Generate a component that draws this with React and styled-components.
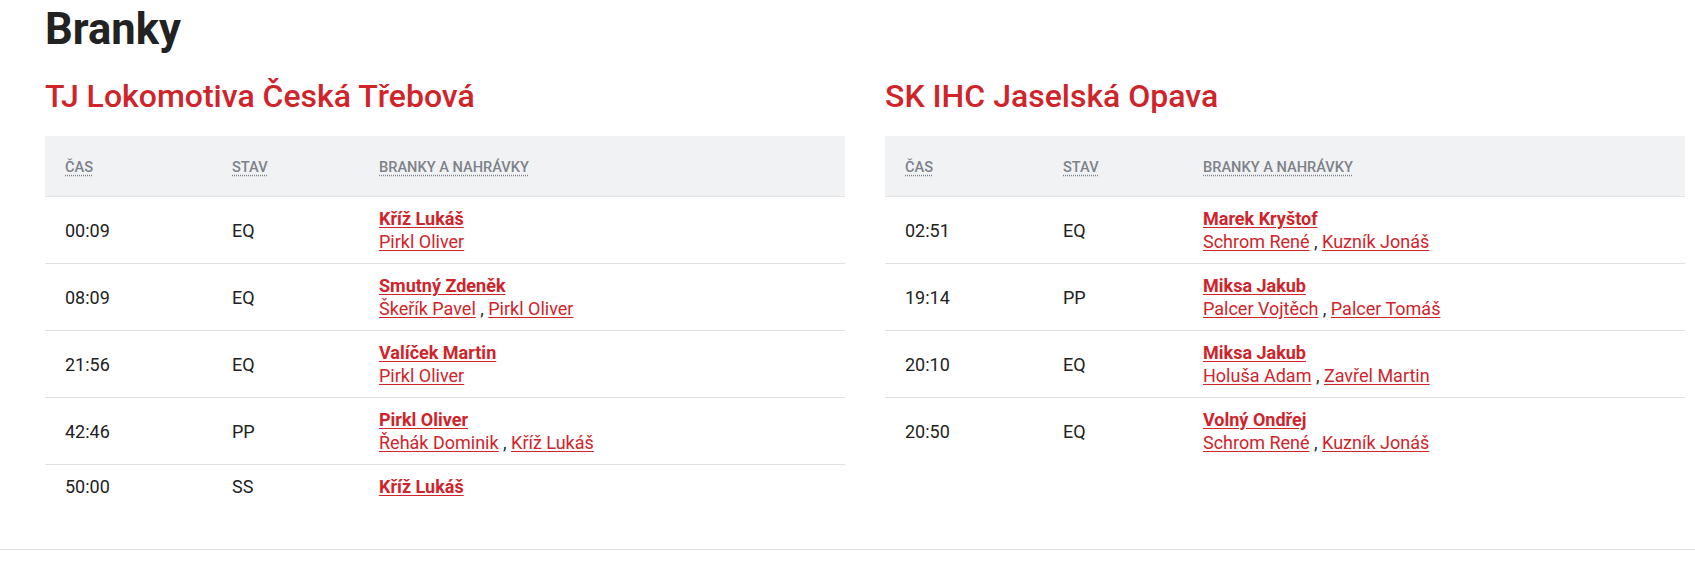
import styled, { createGlobalStyle } from "styled-components";

const GlobalStyle = createGlobalStyle`
  body {
    margin: 0;
    background: #fff;
    font-family: Roboto, "Liberation Sans", Arial, sans-serif;
    color: #222;
  }
`;

const goals = [
    {
        team: "TJ Lokomotiva Česká Třebová",
        cols: "167px 147px 1fr",
        rows: [
            { time: "00:09", state: "EQ", scorer: "Kříž Lukáš", assists: ["Pirkl Oliver"] },
            { time: "08:09", state: "EQ", scorer: "Smutný Zdeněk", assists: ["Škeřík Pavel", "Pirkl Oliver"] },
            { time: "21:56", state: "EQ", scorer: "Valíček Martin", assists: ["Pirkl Oliver"] },
            { time: "42:46", state: "PP", scorer: "Pirkl Oliver", assists: ["Řehák Dominik", "Kříž Lukáš"] },
            { time: "50:00", state: "SS", scorer: "Kříž Lukáš", assists: [] },
        ],
    },
    {
        team: "SK IHC Jaselská Opava",
        cols: "158px 140px 1fr",
        rows: [
            { time: "02:51", state: "EQ", scorer: "Marek Kryštof", assists: ["Schrom René", "Kuzník Jonáš"] },
            { time: "19:14", state: "PP", scorer: "Miksa Jakub", assists: ["Palcer Vojtěch", "Palcer Tomáš"] },
            { time: "20:10", state: "EQ", scorer: "Miksa Jakub", assists: ["Holuša Adam", "Zavřel Martin"] },
            { time: "20:50", state: "EQ", scorer: "Volný Ondřej", assists: ["Schrom René", "Kuzník Jonáš"] },
        ],
    },
];

const Section = styled.section`
  padding: 0 10px 41px 45px;
  border-bottom: 1px solid #e2e2e2;
`;

const Title = styled.h1`
  margin: 0;
  padding-top: 5px;
  font-size: 43.5px;
  line-height: 50px;
  font-weight: 700;
  color: #222;
`;

const Columns = styled.div`
  display: grid;
  grid-template-columns: 1fr 1fr;
  gap: 40px;
`;

const TeamName = styled.h2`
  margin: 21px 0 0;
  font-size: 32px;
  line-height: 40px;
  font-weight: 500;
  color: #d0242b;
`;

const Table = styled.div`
  margin-top: 20px;
`;

const Row = styled.div`
  display: grid;
  grid-template-columns: ${({ $cols }) => $cols};
  align-items: center;
  background: ${({ $head }) => ($head ? "#f1f2f4" : "transparent")};
  min-height: ${({ $head }) => ($head ? "60px" : "0")};
  & + & {
    border-top: ${({ $first }) => ($first ? "none" : "1px solid #e1e1e3")};
  }
`;

const Cell = styled.div`
  padding: 10px 20px;
  font-size: 18px;
  line-height: 23px;
  color: #222;
`;

const HeadLabel = styled.abbr`
  font-size: 14.6px;
  font-weight: 500;
  color: #7d828a;
  text-transform: uppercase;
  text-decoration: underline dotted;
  text-underline-offset: 3px;
  cursor: help;
`;

const PlayerLink = styled.a`
  color: #d0242b;
  font-weight: ${({ $bold }) => ($bold ? 700 : 400)};
  text-decoration: underline;
  text-underline-offset: 2px;
`;

const Line = styled.div`
  display: block;
`;

function GoalTable({ team }) {
    return (
        <div>
            <TeamName>{team.team}</TeamName>
            <Table>
                <Row $head $cols={team.cols}>
                    <Cell><HeadLabel title="Čas">Čas</HeadLabel></Cell>
                    <Cell><HeadLabel title="Stav">Stav</HeadLabel></Cell>
                    <Cell><HeadLabel title="Branky a nahrávky">Branky a nahrávky</HeadLabel></Cell>
                </Row>
                {team.rows.map((goal, i) => (
                    <Row key={i} $cols={team.cols} $first={i === 0}>
                        <Cell>{goal.time}</Cell>
                        <Cell>{goal.state}</Cell>
                        <Cell>
                            <Line><PlayerLink href="#" $bold>{goal.scorer}</PlayerLink></Line>
                            {goal.assists.length > 0 && (
                                <Line>
                                    {goal.assists.map((name, j) => (
                                        <span key={j}>
                                            {j > 0 && " , "}
                                            <PlayerLink href="#">{name}</PlayerLink>
                                        </span>
                                    ))}
                                </Line>
                            )}
                        </Cell>
                    </Row>
                ))}
            </Table>
        </div>
    );
}

export default function App() {
    return (
        <>
            <GlobalStyle />
            <Section>
                <Title>Branky</Title>
                <Columns>
                    {goals.map((team) => (
                        <GoalTable key={team.team} team={team} />
                    ))}
                </Columns>
            </Section>
        </>
    );
}
